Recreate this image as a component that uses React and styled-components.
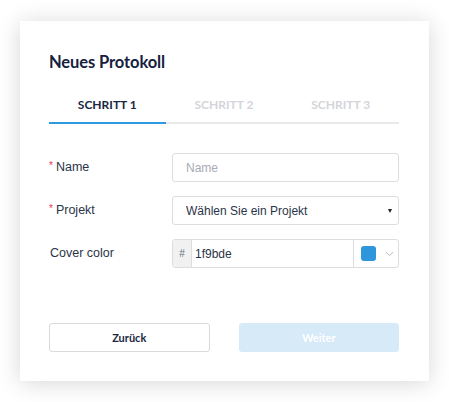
import React from 'react';
import styled, { createGlobalStyle } from 'styled-components';

const GlobalStyle = createGlobalStyle`
  html, body {
    margin: 0;
    padding: 0;
    background: #ffffff;
    font-family: 'Liberation Sans', Arial, sans-serif;
  }
`;

const Page = styled.div`
  padding: 21px 20px;
`;

const Card = styled.div`
  width: 409px;
  height: 360px;
  box-sizing: border-box;
  background: #fff;
  box-shadow: 0 2px 22px rgba(0, 0, 0, 0.16);
  padding: 31px 30px 29px 29px;
  display: flex;
  flex-direction: column;
`;

const Title = styled.h2`
  margin: 0;
  font-family: Lato, 'Liberation Sans', sans-serif;
  font-weight: 700;
  font-size: 16.5px;
  line-height: 20px;
  color: #16213e;
  letter-spacing: -0.1px;
`;

const Tabs = styled.div`
  display: grid;
  grid-template-columns: repeat(3, 1fr);
  margin-top: 22px;
`;

const Tab = styled.div`
  text-align: center;
  font-family: Lato, 'Liberation Sans', sans-serif;
  font-weight: 700;
  font-size: 12px;
  line-height: 22px;
  padding-bottom: 6px;
  color: ${({ $active }) => ($active ? '#1b2740' : '#d3d5da')};
  border-bottom: 2px solid ${({ $active }) => ($active ? '#2d9be0' : '#e9e9eb')};
`;

const Form = styled.div`
  display: flex;
  flex-direction: column;
  gap: 14px;
  margin-top: 29px;
`;

const Row = styled.div`
  display: grid;
  grid-template-columns: 123px 1fr;
  align-items: center;
  height: 29px;
`;

const Label = styled.div`
  font-size: 12.5px;
  color: #2b3447;
  padding-left: ${({ $required }) => ($required ? '0' : '1px')};
  margin-top: -2px;
`;

const Star = styled.span`
  color: #e8364f;
  font-size: 10px;
  margin-right: 3px;
  vertical-align: 2px;
`;

const Field = styled.div`
  height: 29px;
  box-sizing: border-box;
  border: 1px solid #dcdde0;
  border-radius: 3px;
  display: flex;
  align-items: center;
  font-size: 12px;
  color: #2b3447;
  overflow: hidden;
`;

const Input = styled.input`
  border: none;
  outline: none;
  flex: 1;
  height: 100%;
  padding: 0 0 0 13px;
  font-family: 'Liberation Sans', Arial, sans-serif;
  font-size: 12px;
  color: #2b3447;
  background: transparent;

  &::placeholder {
    color: #a7abb3;
  }
`;

const SelectText = styled.span`
  flex: 1;
  padding-left: 13px;
`;

const Caret = styled.span`
  width: 0;
  height: 0;
  border-left: 2.5px solid transparent;
  border-right: 2.5px solid transparent;
  border-top: 4px solid #222;
  margin-right: 6px;
`;

const Prefix = styled.div`
  width: 18px;
  align-self: stretch;
  background: #f1f1f2;
  border-right: 1px solid #dcdde0;
  display: flex;
  align-items: center;
  justify-content: center;
  font-size: 10px;
  color: #6b7080;
`;

const HexValue = styled.span`
  flex: 1;
  padding-left: 3px;
`;

const SwatchBox = styled.div`
  width: 45px;
  align-self: stretch;
  border-left: 1px solid #dcdde0;
  display: flex;
  align-items: center;
  gap: 9px;
  padding-left: 7px;
  box-sizing: border-box;
`;

const Swatch = styled.div`
  width: 15px;
  height: 15px;
  border-radius: 3px;
  background: #2f96dc;
`;

const Footer = styled.div`
  margin-top: auto;
  display: grid;
  grid-template-columns: 1fr 1fr;
  gap: 29px;
`;

const Button = styled.button`
  height: 29px;
  box-sizing: border-box;
  border-radius: 3px;
  font-family: Lato, 'Liberation Sans', sans-serif;
  font-weight: 700;
  font-size: 11px;
  cursor: pointer;
  border: 1px solid ${({ $primary }) => ($primary ? '#d6eaf8' : '#d9dadd')};
  background: ${({ $primary }) => ($primary ? '#d6eaf8' : '#fff')};
  color: ${({ $primary }) => ($primary ? '#ffffff' : '#1b2740')};
`;

export default function App() {
  return (
    <>
      <GlobalStyle />
      <Page>
        <Card>
          <Title>Neues Protokoll</Title>
          <Tabs>
            <Tab $active>SCHRITT 1</Tab>
            <Tab>SCHRITT 2</Tab>
            <Tab>SCHRITT 3</Tab>
          </Tabs>
          <Form>
            <Row>
              <Label $required><Star>*</Star>Name</Label>
              <Field>
                <Input placeholder="Name" />
              </Field>
            </Row>
            <Row>
              <Label $required><Star>*</Star>Projekt</Label>
              <Field>
                <SelectText>Wählen Sie ein Projekt</SelectText>
                <Caret />
              </Field>
            </Row>
            <Row>
              <Label>Cover color</Label>
              <Field>
                <Prefix>#</Prefix>
                <HexValue>1f9bde</HexValue>
                <SwatchBox>
                  <Swatch />
                  <svg width="9" height="6" viewBox="0 0 9 6">
                    <path d="M1 1.2 L4.5 4.6 L8 1.2" fill="none" stroke="#b5b8bf" strokeWidth="1" />
                  </svg>
                </SwatchBox>
              </Field>
            </Row>
          </Form>
          <Footer>
            <Button>Zurück</Button>
            <Button $primary>Weiter</Button>
          </Footer>
        </Card>
      </Page>
    </>
  );
}
